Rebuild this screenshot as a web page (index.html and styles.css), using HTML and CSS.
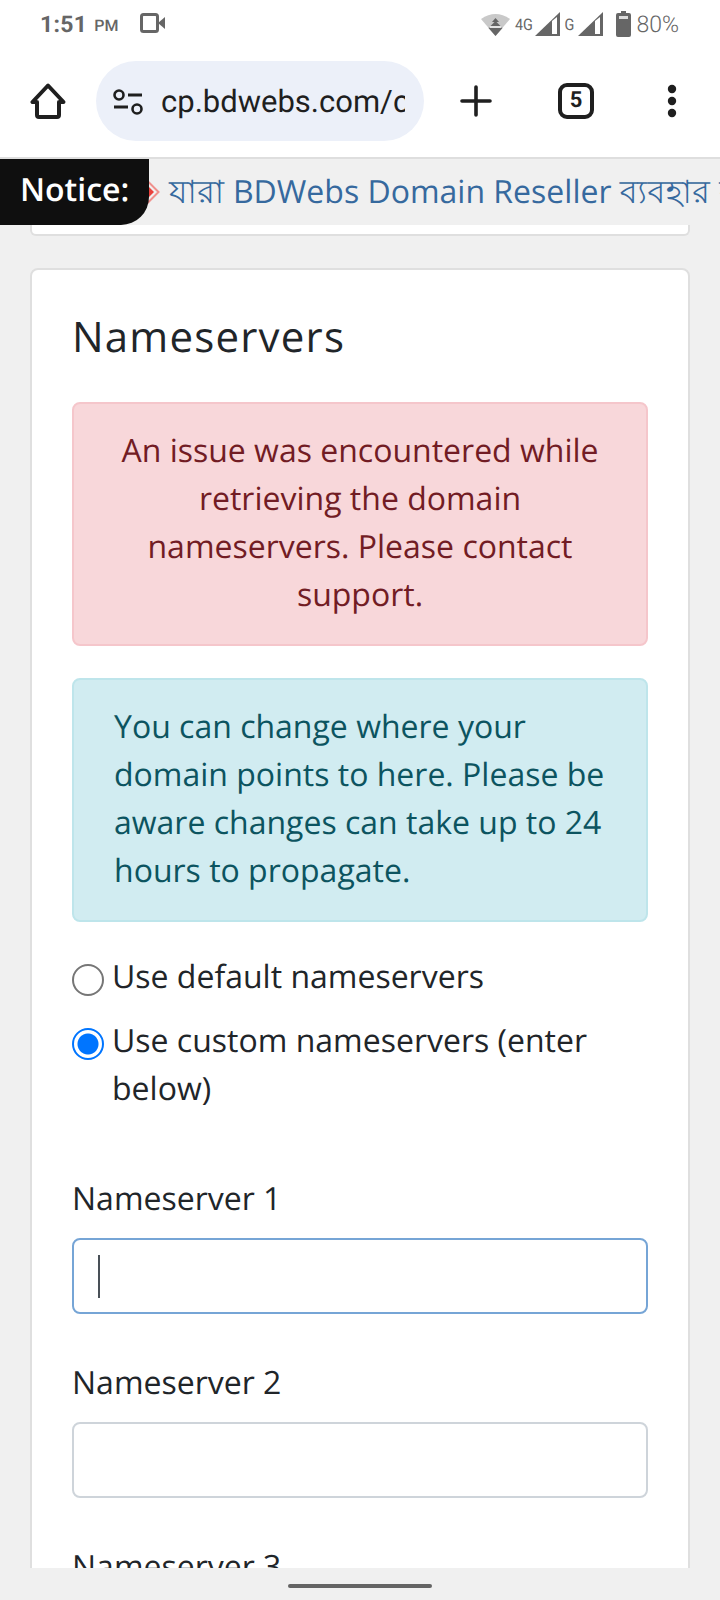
FILE: index.html
```html
<!DOCTYPE html>
<html lang="en">
<head>
<meta charset="utf-8">
<title>Nameservers</title>
<link rel="stylesheet" href="styles.css">
</head>
<body>
<div class="screen">
  <div class="status">
    <div class="status-left">
      <span class="time">1:51</span><span class="ampm">PM</span>
      <svg class="cam" width="25" height="20" viewBox="0 0 25 20"><rect x="1.500" y="1.500" width="16" height="17" rx="2" fill="none" stroke="#666" stroke-width="3"/><path d="M18 10l7-6v12z" fill="#666"/></svg>
    </div>
    <div class="status-right">
      <svg class="wifi" width="29" height="23" viewBox="0 0 29 23"><path d="M0 6Q14.500-4 29 6L14.500 23z" fill="#c9c9c9"/><path d="M14.500 8l7 7-7 8-7-8z" fill="#666"/><path d="M8.500 14h12" stroke="#e4e4e4" stroke-width="2"/><path d="M14.500 5l3.500 4h-7z" fill="#666"/></svg>
      <span class="net net-4g">4G</span>
      <svg class="bar" width="25" height="24" viewBox="0 0 25 24"><path d="M0 24L25 0v24z" fill="#666"/><path d="M17 9v13h5V5z" fill="#fff"/></svg>
      <span class="net net-g">G</span>
      <svg class="bar" width="25" height="24" viewBox="0 0 25 24"><path d="M0 24L25 0v24z" fill="#666"/><path d="M17 9v13h5V5z" fill="#fff"/></svg>
      <svg class="batt" width="15" height="26" viewBox="0 0 15 26"><path d="M5 0h5v2h3a2 2 0 0 1 2 2v20a2 2 0 0 1-2 2H2a2 2 0 0 1-2-2V4a2 2 0 0 1 2-2h3z" fill="#666"/><rect x="3" y="5" width="9" height="3" fill="#ddd"/></svg>
      <span class="pct">80%</span>
    </div>
  </div>
  <div class="toolbar">
    <svg class="home" width="36" height="36" viewBox="0 0 36 36"><path d="M18 2.500L2.500 19H7v13a2 2 0 0 0 2 2h18a2 2 0 0 0 2-2V19h4.500z" fill="none" stroke="#1f1f1f" stroke-width="4" stroke-linejoin="round"/></svg>
    <div class="omnibox">
      <svg class="tune" width="30" height="26" viewBox="0 0 30 26"><circle cx="6" cy="6" r="4.500" fill="none" stroke="#1f1f1f" stroke-width="2.600"/><path d="M15 6h14M1 18h14" stroke="#1f1f1f" stroke-width="2.800"/><circle cx="24" cy="20" r="4.500" fill="none" stroke="#1f1f1f" stroke-width="2.600"/></svg>
      <span class="url">cp.bdwebs.com/clientarea.php</span>
    </div>
    <svg class="plus" width="32" height="32" viewBox="0 0 32 32"><path d="M16 2v28M2 16h28" stroke="#1f1f1f" stroke-width="3.600" stroke-linecap="round"/></svg>
    <div class="tabs">5</div>
    <svg class="dots" width="12" height="34" viewBox="0 0 12 34"><circle cx="6" cy="5" r="4.200" fill="#1f1f1f"/><circle cx="6" cy="17" r="4.200" fill="#1f1f1f"/><circle cx="6" cy="29" r="4.200" fill="#1f1f1f"/></svg>
  </div>
  <div class="notice">
    <div class="notice-label">Notice:</div>
    <div class="marquee">
      <svg class="diamond" width="24" height="24" viewBox="0 0 24 24"><path d="M12 1.500L22.500 12 12 22.500 1.500 12z" fill="none" stroke="#f0908c" stroke-width="2"/><path d="M12 6l6 6-6 6-6-6z" fill="#e8413c"/></svg>
      <span class="ticker"><span class="bn">যারা</span> BDWebs Domain Reseller <span class="bn">ব্যবহার করেন</span></span>
    </div>
  </div>
  <main class="content">
    <div class="prev-card"></div>
    <section class="card">
      <h2 class="title">Nameservers</h2>
      <div class="alert alert-danger">An issue was encountered while retrieving the domain nameservers. Please contact support.</div>
      <div class="alert alert-info">You can change where your domain points to here. Please be aware changes can take up to 24 hours to propagate.</div>
      <div class="radios">
        <div class="radio-row"><span class="radio"></span><span class="radio-text">Use default nameservers</span></div>
        <div class="radio-row"><span class="radio radio-on"></span><span class="radio-text">Use custom nameservers (enter below)</span></div>
      </div>
      <div class="field">
        <div class="field-label">Nameserver 1</div>
        <div class="input input-focus"><span class="caret"></span></div>
      </div>
      <div class="field">
        <div class="field-label">Nameserver 2</div>
        <div class="input"></div>
      </div>
      <div class="field">
        <div class="field-label">Nameserver 3</div>
        <div class="input"></div>
      </div>
    </section>
  </main>
  <div class="navbar"><div class="handle"></div></div>
</div>
</body>
</html>
```
FILE: styles.css
```css
* { box-sizing: border-box; }
html, body { margin: 0; padding: 0; }
body { background: #f0f0f0; font-family: "Open Sans", "Noto Sans", sans-serif; color: #212529; text-rendering: geometricPrecision; }
.screen { width: 720px; height: 1600px; display: flex; flex-direction: column; overflow: hidden; }

.status { height: 50px; background: #fff; display: flex; justify-content: space-between; align-items: center; padding: 0 41px 2px 40px; color: #666; font-family: Roboto, sans-serif; flex: none; }
.status-left { display: flex; align-items: center; }
.time { font-size: 23px; font-weight: 700; letter-spacing: .3px; }
.ampm { font-size: 16px; font-weight: 500; margin: 3px 0 0 7px; }
.cam { margin: -2px 0 0 22px; }
.status-right { display: flex; align-items: center; }
.net { font-size: 16px; transform: scaleX(.9); }
.net-4g { margin: 0 1px 0 4px; }
.net-g { margin: 0 4px 0 4px; }
.batt { margin-left: 13px; }
.pct { font-size: 23px; font-weight: 300; margin-left: 5px; }

.toolbar { height: 109px; background: #fff; border-bottom: 2px solid #dedede; display: flex; align-items: center; padding: 0 0 5px 30px; flex: none; }
.omnibox { width: 328px; height: 80px; border-radius: 40px; background: #ecf0f9; margin-left: 30px; display: flex; align-items: center; padding: 0 19px 0 17px; gap: 18px; overflow: hidden; }
.tune { flex: none; margin-top: 2px; }
.url { font-family: Roboto, sans-serif; font-size: 31px; color: #1f1f1f; white-space: nowrap; overflow: hidden; }
.plus { margin-left: 36px; }
.tabs { width: 36px; height: 36px; border: 4px solid #1f1f1f; border-radius: 9px; margin-left: 66px; font: 700 22px/28px Roboto, sans-serif; color: #1f1f1f; text-align: center; }
.dots { margin-left: 72px; }

.notice { height: 66px; background: #f0f0f0; display: flex; align-items: center; white-space: nowrap; overflow: hidden; position: relative; z-index: 1; flex: none; }
.notice-label { width: 149px; height: 66px; background: #0f0f0f; color: #fff; font-size: 32px; font-weight: 600; line-height: 62px; padding-left: 20px; border-bottom-right-radius: 28px; flex: none; position: relative; z-index: 1; }
.marquee { display: flex; align-items: center; margin-left: -13px; color: #36699e; font-size: 32px; gap: 9px; }
.ticker { padding-top: 3px; }
.bn { letter-spacing: .5px; }
.diamond { flex: none; }

.content { flex: 1; min-height: 0; overflow: hidden; padding: 0 30px; }
.prev-card { height: 11px; background: #fff; border: 2px solid #dfdfdf; border-top: 0; border-radius: 0 0 6px 6px; margin-bottom: 32px; }
.card { background: #fff; border: 2px solid #dfdfdf; border-radius: 8px; padding: 40px; font-size: 32px; line-height: 48px; }
.title { margin: 2px 0 40px; font-size: 42px; font-weight: 400; line-height: 50px; letter-spacing: 1.2px; }
.alert { border: 2px solid; border-radius: 8px; padding: 23px 40px 25px; margin-bottom: 32px; }
.alert-danger { background: #f8d7da; border-color: #f5c6cb; color: #721c24; text-align: center; }
.alert-info { background: #d1ecf1; border-color: #bee5eb; color: #0c5460; }
.radios { display: flex; flex-direction: column; gap: 16px; margin-bottom: 61px; }
.radio-row { display: flex; gap: 8px; }
.radio { width: 32px; height: 32px; border-radius: 50%; border: 2px solid #767676; background: #fff; flex: none; margin-top: 10px; }
.radio-on { border-color: #0075ff; background: radial-gradient(circle, #0075ff 0 10px, #fff 11px); }
.radio-text { margin: -1px 0 1px; }
.field { margin-bottom: 45px; }
.field-label { margin-bottom: 15px; }
.input { height: 76px; border: 2px solid #ced4da; border-radius: 8px; padding: 15px 24px; background: #fff; }
.input-focus { border-color: #76a5d6; }
.caret { display: block; width: 2px; height: 43px; background: #495057; }

.navbar { height: 32px; background: #f0f0f0; display: flex; justify-content: center; align-items: flex-start; padding-top: 16px; flex: none; }
.handle { width: 144px; height: 4px; border-radius: 2px; background: #646464; }
```
